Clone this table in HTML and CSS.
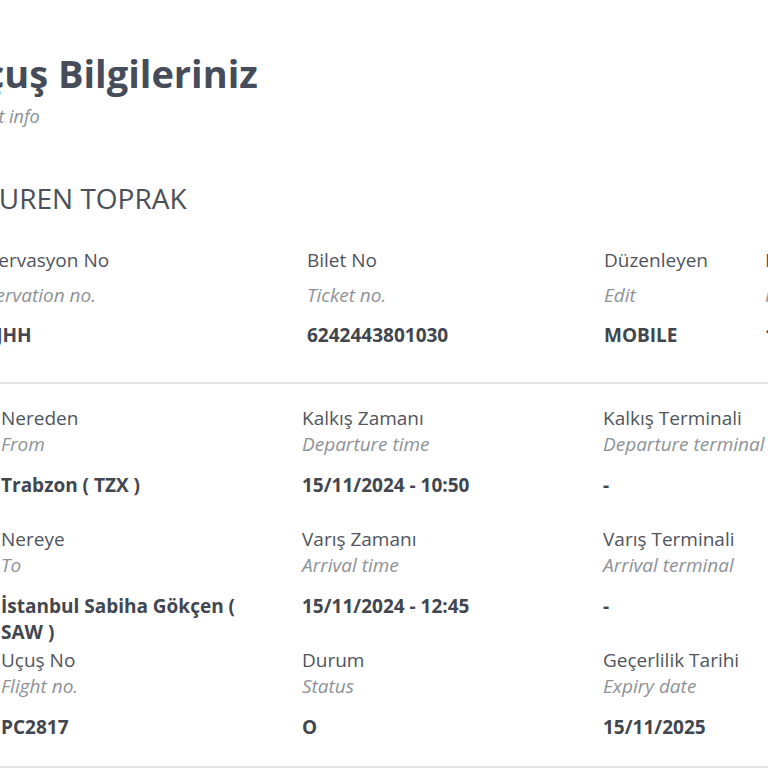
FILE: index.html
```html
<!DOCTYPE html>
<html lang="tr">
<head>
    <meta charset="UTF-8">
    <meta name="viewport" content="width=device-width, initial-scale=1.0">
    <title>Uçuş Bilgileriniz</title>
    <link rel="stylesheet" href="styles.css">
</head>
<body>
    <div class="page">
        <div class="header">
            <h1>Uçuş Bilgileriniz</h1>
            <p class="subtitle">Flight info</p>
        </div>

        <h2 class="passenger">ÖZUREN TOPRAK</h2>

        <div class="grid grid-ticket">
            <div class="cell">
                <div class="label">Rezervasyon No</div>
                <div class="sublabel">Reservation no.</div>
                <div class="value">W2JHH</div>
            </div>
            <div class="cell">
                <div class="label">Bilet No</div>
                <div class="sublabel">Ticket no.</div>
                <div class="value">6242443801030</div>
            </div>
            <div class="cell">
                <div class="label">Düzenleyen</div>
                <div class="sublabel">Edit</div>
                <div class="value">MOBILE</div>
            </div>
            <div class="cell">
                <div class="label">Düzenlenme Tarihi</div>
                <div class="sublabel">Issue date</div>
                <div class="value">15/11/2024</div>
            </div>
        </div>

        <hr class="divider">

        <div class="grid grid-flight">
            <div class="cell">
                <div class="label">Nereden</div>
                <div class="sublabel">From</div>
                <div class="value">Trabzon ( TZX )</div>
            </div>
            <div class="cell">
                <div class="label">Kalkış Zamanı</div>
                <div class="sublabel">Departure time</div>
                <div class="value">15/11/2024 - 10:50</div>
            </div>
            <div class="cell">
                <div class="label">Kalkış Terminali</div>
                <div class="sublabel">Departure terminal</div>
                <div class="value">-</div>
            </div>

            <div class="cell">
                <div class="label">Nereye</div>
                <div class="sublabel">To</div>
                <div class="value">İstanbul Sabiha Gökçen ( SAW )</div>
            </div>
            <div class="cell">
                <div class="label">Varış Zamanı</div>
                <div class="sublabel">Arrival time</div>
                <div class="value">15/11/2024 - 12:45</div>
            </div>
            <div class="cell">
                <div class="label">Varış Terminali</div>
                <div class="sublabel">Arrival terminal</div>
                <div class="value">-</div>
            </div>

            <div class="cell">
                <div class="label">Uçuş No</div>
                <div class="sublabel">Flight no.</div>
                <div class="value">PC2817</div>
            </div>
            <div class="cell">
                <div class="label">Durum</div>
                <div class="sublabel">Status</div>
                <div class="value">O</div>
            </div>
            <div class="cell">
                <div class="label">Geçerlilik Tarihi</div>
                <div class="sublabel">Expiry date</div>
                <div class="value">15/11/2025</div>
            </div>
        </div>

        <hr class="divider">
    </div>
</body>
</html>
```

FILE: styles.css
```css
* {
    margin: 0;
    padding: 0;
    box-sizing: border-box;
}

html, body {
    background: #fff;
    overflow: hidden;
}

body {
    font-family: 'Open Sans', 'Noto Sans', sans-serif;
    color: #4a4f58;
}

/* the page is seen cropped: it starts a little left of the window */
.page {
    margin-left: -39px;
    width: 860px;
    padding-top: 51px;
}

.header h1 {
    margin-left: -5px;
    font-size: 38px;
    line-height: 45px;
    font-weight: 700;
    color: #464c59;
}

.header .subtitle {
    margin-top: 8px;
    font-size: 18px;
    line-height: 24px;
    font-style: italic;
    color: #8b9097;
}

.passenger {
    margin-top: 52px;
    font-size: 28px;
    line-height: 36px;
    font-weight: 400;
    color: #4a4f58;
}

.grid {
    display: grid;
}

.grid-ticket {
    margin-top: 31px;
    padding-left: 6px;
    grid-template-columns: 340px 297px 161px 1fr;
}

.grid-flight {
    margin-top: 21px;
    padding-left: 40px;
    grid-template-columns: 301px 301px 1fr;
    row-gap: 2px;
}

.cell {
    padding-right: 30px;
}

.label {
    font-size: 19px;
    line-height: 26px;
    color: #4f545d;
    white-space: nowrap;
}

.sublabel {
    font-size: 19px;
    line-height: 26px;
    font-style: italic;
    color: #8e9298;
    white-space: nowrap;
}

.value {
    font-size: 19px;
    line-height: 26px;
    font-weight: 700;
    color: #41464f;
}

.grid-ticket .sublabel {
    margin-top: 9px;
}

.grid-ticket .value {
    margin-top: 14px;
    white-space: nowrap;
}

.grid-flight .value {
    margin-top: 15px;
    min-height: 52px;
}

.divider {
    border: none;
    height: 2px;
    background: #e3e4e6;
}

.grid-ticket + .divider {
    margin-top: 34px;
}
```
